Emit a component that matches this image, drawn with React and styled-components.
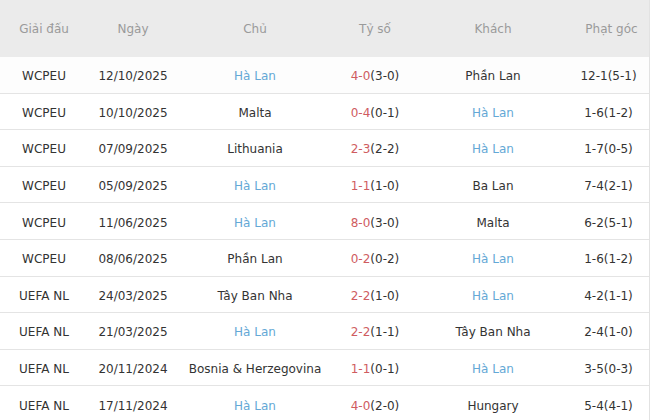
import React from 'react'
import styled, { createGlobalStyle } from 'styled-components'

const GlobalStyle = createGlobalStyle`
  html, body {
    margin: 0;
    padding: 0;
    background: #ffffff;
  }
  body {
    font-family: "DejaVu Sans", Verdana, sans-serif;
  }
`

const COLS = '88px 90px 154px 86px 150px 1fr'

const colors = {
  headerBg: '#ebebeb',
  headerText: '#9a9a9a',
  text: '#333333',
  blue: '#64a8d6',
  red: '#cf5c5f',
  border: '#e4e4e4',
}

const Table = styled.div`
  width: 650px;
  height: 420px;
  overflow: hidden;
  display: flex;
  flex-direction: column;
  background: #fff;
  border-right: 1px solid #e2e2e2;
  box-sizing: border-box;
`

const HeaderRow = styled.div`
  display: grid;
  grid-template-columns: ${COLS};
  height: 57px;
  flex-shrink: 0;
  align-items: center;
  background: ${colors.headerBg};
  color: ${colors.headerText};
  font-size: 12px;
`

const Row = styled.div`
  display: grid;
  grid-template-columns: ${COLS};
  height: 36.6px;
  flex-shrink: 0;
  align-items: center;
  box-sizing: border-box;
  border-bottom: 1px solid ${colors.border};
  color: ${colors.text};
  font-size: 12px;
  background: ${props => props.first ? '#fdfdfd' : '#fff'};
`

const Cell = styled.div`
  text-align: center;
  white-space: nowrap;
  padding-top: ${props => props.header ? '0' : '3px'};
`

const HeaderCell = styled(Cell)`
  padding-left: ${props => props.last ? '6px' : '0'};
`

const Team = styled(Cell)`
  color: ${props => props.home ? colors.blue : colors.text};
`

const Full = styled.span`
  color: ${colors.red};
`

const HOME = 'Hà Lan'

const matches = [
  ['WCPEU', '12/10/2025', 'Hà Lan', '4-0', '3-0', 'Phần Lan', '12-1(5-1)'],
  ['WCPEU', '10/10/2025', 'Malta', '0-4', '0-1', 'Hà Lan', '1-6(1-2)'],
  ['WCPEU', '07/09/2025', 'Lithuania', '2-3', '2-2', 'Hà Lan', '1-7(0-5)'],
  ['WCPEU', '05/09/2025', 'Hà Lan', '1-1', '1-0', 'Ba Lan', '7-4(2-1)'],
  ['WCPEU', '11/06/2025', 'Hà Lan', '8-0', '3-0', 'Malta', '6-2(5-1)'],
  ['WCPEU', '08/06/2025', 'Phần Lan', '0-2', '0-2', 'Hà Lan', '1-6(1-2)'],
  ['UEFA NL', '24/03/2025', 'Tây Ban Nha', '2-2', '1-0', 'Hà Lan', '4-2(1-1)'],
  ['UEFA NL', '21/03/2025', 'Hà Lan', '2-2', '1-1', 'Tây Ban Nha', '2-4(1-0)'],
  ['UEFA NL', '20/11/2024', 'Bosnia & Herzegovina', '1-1', '0-1', 'Hà Lan', '3-5(0-3)'],
  ['UEFA NL', '17/11/2024', 'Hà Lan', '4-0', '2-0', 'Hungary', '5-4(4-1)'],
]

const headers = ['Giải đấu', 'Ngày', 'Chủ', 'Tỷ số', 'Khách', 'Phạt góc']

export default function App() {
  return (
    <>
      <GlobalStyle />
      <Table>
        <HeaderRow>
          {headers.map((h, i) =>
            <HeaderCell header last={i === headers.length - 1} key={h}>{h}</HeaderCell>
          )}
        </HeaderRow>
        {matches.map(([league, date, home, ft, ht, away, corners], i) =>
          <Row key={i} first={i === 0}>
            <Cell>{league}</Cell>
            <Cell>{date}</Cell>
            <Team home={home === HOME}>{home}</Team>
            <Cell><Full>{ft}</Full>({ht})</Cell>
            <Team home={away === HOME}>{away}</Team>
            <Cell>{corners}</Cell>
          </Row>
        )}
      </Table>
    </>
  )
}
